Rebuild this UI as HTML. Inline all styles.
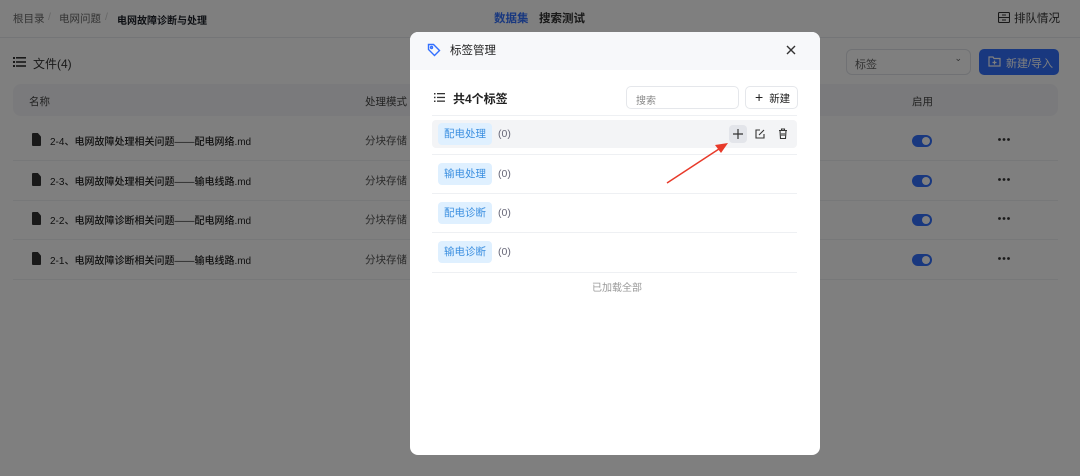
<!DOCTYPE html>
<html><head><meta charset="utf-8"><style>
*{box-sizing:border-box;margin:0;padding:0}
body{width:1080px;height:476px;overflow:hidden;background:#fff;font-family:"Liberation Sans","Noto Sans CJK SC",sans-serif;color:#1d2129;position:relative}
.a{position:absolute;white-space:nowrap}
.ov{position:absolute;left:0;top:0;width:1080px;height:476px;background:rgba(0,0,0,0.5)}
.row{position:absolute;left:13px;width:1045px;height:40px;border-bottom:1px solid #eef0f3}
.tgl{position:absolute;width:20px;height:12px;border-radius:6px;background:#3370ff}
.tgl::after{content:"";position:absolute;right:2px;top:2px;width:8px;height:8px;border-radius:50%;background:#fff}
.chip{position:absolute;left:438px;width:54px;height:22px;border-radius:4px;background:#dff0ff;color:#3b8fe0;font-size:10.5px;text-align:center;line-height:22px}
.cnt{position:absolute;left:498px;font-size:10.5px;color:#667}
.ln{position:absolute;left:432px;width:365px;height:1px;background:#eef0f3}
.fi{position:absolute;left:32px;width:9px;height:13px;background:#333;border-radius:1px;clip-path:polygon(0 0,65% 0,100% 28%,100% 100%,0 100%)}
.fn{position:absolute;left:50px;font-size:10px;color:#222;font-weight:500}
.pm{position:absolute;left:365px;font-size:10.5px;color:#555}
.dots{position:absolute;left:998px}
.bc{position:absolute;top:11px;font-size:10.5px;color:#666}
</style></head><body>
<div class="a" style="left:0;top:37px;width:1080px;height:1px;background:#e8eaee"></div>
<div class="bc" style="left:13px">根目录</div><div class="bc" style="left:48px;color:#ccc">/</div>
<div class="bc" style="left:59px">电网问题</div><div class="bc" style="left:105px;color:#ccc">/</div>
<div class="bc" style="left:117px;color:#1d2129;font-weight:bold;font-size:10px;top:12px">电网故障诊断与处理</div>
<div class="a" style="left:494px;top:10px;font-size:11.5px;color:#3370ff;font-weight:bold">数据集</div>
<div class="a" style="left:539px;top:10px;font-size:11.5px;color:#333;font-weight:bold">搜索测试</div>
<svg class="a" style="left:998px;top:12px" width="12" height="11" viewBox="0 0 12 11" fill="none" stroke="#333" stroke-width="1.1"><rect x="0.5" y="0.5" width="11" height="10" rx="1"/><path d="M0.5 5.5h11M4 3h4M4 8h4"/></svg>
<div class="a" style="left:1014px;top:10px;font-size:11.5px;color:#333">排队情况</div>
<svg class="a" style="left:13px;top:57px" width="13" height="10" viewBox="0 0 13 10" fill="#333"><rect x="0" y="0" width="2" height="2"/><rect x="3" y="0" width="10" height="1.6"/><rect x="0" y="4" width="2" height="2"/><rect x="3" y="4.2" width="10" height="1.6"/><rect x="0" y="8" width="2" height="2"/><rect x="3" y="8.2" width="10" height="1.6"/></svg>
<div class="a" style="left:33px;top:55px;font-size:12px;color:#333">文件(4)</div>
<div class="a" style="left:846px;top:49px;width:125px;height:26px;border:1px solid #e0e3e8;border-radius:6px;font-size:11px;color:#666;padding:6px 8px">标签<span style="position:absolute;right:8px;top:3px;font-size:9px">⌄</span></div>
<div class="a" style="left:979px;top:49px;width:80px;height:26px;border-radius:5px;background:#3370ff;color:#fff;font-size:11px;padding:6px 0 0 27px">新建/导入</div>
<svg class="a" style="left:988px;top:56px" width="13" height="11" viewBox="0 0 13 11" fill="none" stroke="#fff" stroke-width="1.2"><path d="M1 1h4l1 1.5h6v7.5H1z"/><path d="M6.5 4.5v4M4.5 6.5h4"/></svg>
<div class="a" style="left:13px;top:84px;width:1045px;height:32px;border-radius:8px;background:#f4f5f8"></div>
<div class="a" style="left:29px;top:94px;font-size:10.5px;color:#444">名称</div>
<div class="a" style="left:365px;top:94px;font-size:10.5px;color:#444">处理模式</div>
<div class="a" style="left:912px;top:94px;font-size:10.5px;color:#444">启用</div>
<div class="row" style="top:121px"></div><div class="row" style="top:161px"></div><div class="row" style="top:200px"></div><div class="row" style="top:240px"></div>
<div class="fi" style="top:133px"></div><div class="fi" style="top:173px"></div><div class="fi" style="top:212px"></div><div class="fi" style="top:252px"></div>
<div class="fn" style="top:133px">2-4、电网故障处理相关问题——配电网络.md</div>
<div class="fn" style="top:173px">2-3、电网故障处理相关问题——输电线路.md</div>
<div class="fn" style="top:212px">2-2、电网故障诊断相关问题——配电网络.md</div>
<div class="fn" style="top:252px">2-1、电网故障诊断相关问题——输电线路.md</div>
<div class="pm" style="top:133px">分块存储</div><div class="pm" style="top:173px">分块存储</div><div class="pm" style="top:212px">分块存储</div><div class="pm" style="top:252px">分块存储</div>
<div class="tgl" style="left:912px;top:135px"></div><div class="tgl" style="left:912px;top:175px"></div><div class="tgl" style="left:912px;top:214px"></div><div class="tgl" style="left:912px;top:254px"></div>
<svg class="dots" style="top:138px" width="12" height="3"><circle cx="1.5" cy="1.5" r="1.4" fill="#333"/><circle cx="6" cy="1.5" r="1.4" fill="#333"/><circle cx="10.5" cy="1.5" r="1.4" fill="#333"/></svg>
<svg class="dots" style="top:178px" width="12" height="3"><circle cx="1.5" cy="1.5" r="1.4" fill="#333"/><circle cx="6" cy="1.5" r="1.4" fill="#333"/><circle cx="10.5" cy="1.5" r="1.4" fill="#333"/></svg>
<svg class="dots" style="top:217px" width="12" height="3"><circle cx="1.5" cy="1.5" r="1.4" fill="#333"/><circle cx="6" cy="1.5" r="1.4" fill="#333"/><circle cx="10.5" cy="1.5" r="1.4" fill="#333"/></svg>
<svg class="dots" style="top:257px" width="12" height="3"><circle cx="1.5" cy="1.5" r="1.4" fill="#333"/><circle cx="6" cy="1.5" r="1.4" fill="#333"/><circle cx="10.5" cy="1.5" r="1.4" fill="#333"/></svg>
<div class="ov"></div>
<div class="a" style="left:410px;top:32px;width:410px;height:423px;background:#fff;border-radius:8px;overflow:hidden">
<div style="height:38px;background:#f7f8fa"></div></div>
<svg class="a" style="left:427px;top:43px" width="14" height="14" viewBox="0 0 14 14" fill="none" stroke="#3370ff" stroke-width="1.4"><path d="M1.5 1.5h5l6 6-5 5-6-6z"/><circle cx="4.5" cy="4.5" r="1"/></svg>
<div class="a" style="left:450px;top:42px;font-size:11.5px;color:#222">标签管理</div>
<svg class="a" style="left:786px;top:45px" width="10" height="10" viewBox="0 0 10 10" stroke="#333" stroke-width="1.4"><path d="M1 1l8 8M9 1l-8 8"/></svg>
<svg class="a" style="left:434px;top:93px" width="11" height="9" viewBox="0 0 11 9" fill="#333"><rect x="0" y="0" width="1.5" height="1.5"/><rect x="3" y="0" width="8" height="1.3"/><rect x="0" y="3.7" width="1.5" height="1.5"/><rect x="3" y="3.8" width="8" height="1.3"/><rect x="0" y="7.5" width="1.5" height="1.5"/><rect x="3" y="7.5" width="8" height="1.3"/></svg>
<div class="a" style="left:453px;top:90px;font-size:12px;font-weight:bold;color:#222">共4个标签</div>
<div class="a" style="left:626px;top:86px;width:113px;height:23px;border:1px solid #e5e7eb;border-radius:5px;font-size:10px;color:#888;padding:5px 9px">搜索</div>
<div class="a" style="left:745px;top:86px;width:53px;height:23px;border:1px solid #e5e7eb;border-radius:5px;font-size:10.5px;color:#222;padding:4px 0 0 9px"><span style="font-size:14px;line-height:12px;margin-right:6px">+</span>新建</div>
<div class="ln" style="top:115px"></div>
<div class="a" style="left:432px;top:120px;width:365px;height:28px;background:#f3f4f6;border-radius:4px"></div>
<div class="chip" style="top:123px">配电处理</div><div class="cnt" style="top:128px">(0)</div>
<div class="a" style="left:729px;top:125px;width:18px;height:18px;border-radius:4px;background:#e3e5ea"></div>
<svg class="a" style="left:733px;top:129px" width="10" height="10" viewBox="0 0 10 10" stroke="#333" stroke-width="1.2"><path d="M5 0v10M0 5h10"/></svg>
<svg class="a" style="left:755px;top:129px" width="10" height="10" viewBox="0 0 10 10" fill="none" stroke="#333" stroke-width="1.1"><path d="M5 1H1v8h8V5"/><path d="M4 6l5-5"/></svg>
<svg class="a" style="left:778px;top:128px" width="10" height="11" viewBox="0 0 10 11" fill="none" stroke="#333" stroke-width="1.1"><path d="M1 2.5h8M3.5 2.5V1h3v1.5M2 2.5l.5 8h5l.5-8M4 5v3M6 5v3"/></svg>
<div class="ln" style="top:154px"></div>
<div class="chip" style="top:163px">输电处理</div><div class="cnt" style="top:168px">(0)</div>
<div class="ln" style="top:193px"></div>
<div class="chip" style="top:202px">配电诊断</div><div class="cnt" style="top:207px">(0)</div>
<div class="ln" style="top:232px"></div>
<div class="chip" style="top:241px">输电诊断</div><div class="cnt" style="top:246px">(0)</div>
<div class="ln" style="top:272px"></div>
<div class="a" style="left:592px;top:279px;font-size:10px;color:#999">已加载全部</div>
<svg class="a" style="left:660px;top:136px" width="75" height="52" viewBox="0 0 75 52"><path d="M7 47L62 11" stroke="#e83a2a" stroke-width="1.5"/><path d="M68 7L55 9L61 17z" fill="#e83a2a"/></svg>
</body></html>
